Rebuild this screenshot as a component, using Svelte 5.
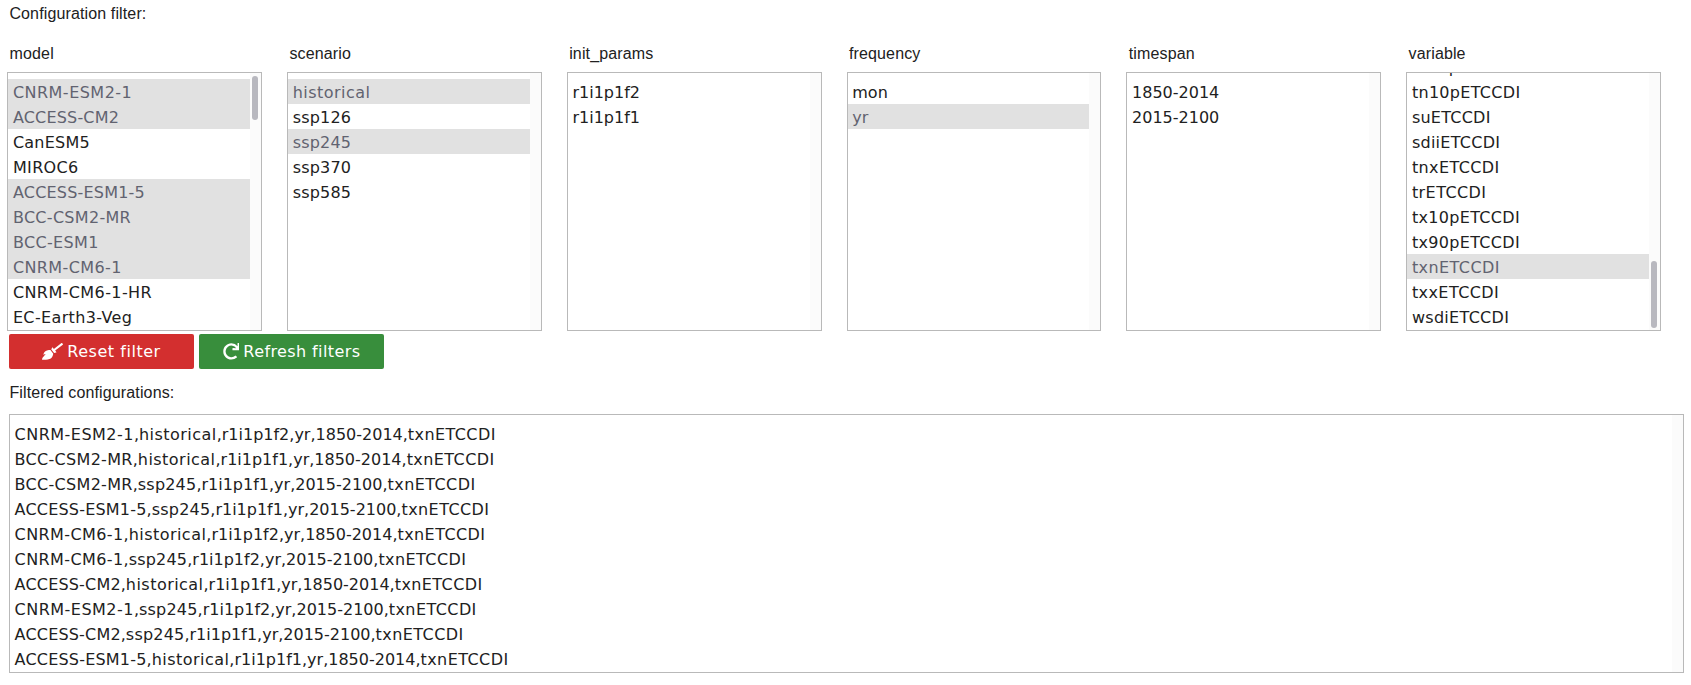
<script>
  // Extra letter spacing, in pixels, for each value shown in the lists.
  const tracking = {
    'CNRM-ESM2-1': 0.48,
    'ACCESS-CM2': 0.18,
    CanESM5: 0.24,
    MIROC6: 0.36,
    'ACCESS-ESM1-5': 0.2,
    'BCC-CSM2-MR': 0.3,
    'BCC-ESM1': 0.35,
    'CNRM-CM6-1': 0.4,
    'CNRM-CM6-1-HR': 0.41,
    'EC-Earth3-Veg': 0.36,
    historical: 0.46,
    ssp126: 0.2,
    ssp245: 0.2,
    ssp370: 0.2,
    ssp585: 0.2,
    tn10pETCCDI: 0.3,
    suETCCDI: 0.24,
    sdiiETCCDI: 0.26,
    tnxETCCDI: 0.4,
    trETCCDI: 0.43,
    tx10pETCCDI: 0.32,
    tx90pETCCDI: 0.32,
    txnETCCDI: 0.42,
    txxETCCDI: 0.42,
    wsdiETCCDI: 0.3
  };
  const space = (value) => tracking[value] ?? 0;

  const filters = [
    {
      name: 'model',
      options: ['CNRM-ESM2-1', 'ACCESS-CM2', 'CanESM5', 'MIROC6', 'ACCESS-ESM1-5', 'BCC-CSM2-MR', 'BCC-ESM1', 'CNRM-CM6-1', 'CNRM-CM6-1-HR', 'EC-Earth3-Veg'],
      selected: ['CNRM-ESM2-1', 'ACCESS-CM2', 'ACCESS-ESM1-5', 'BCC-CSM2-MR', 'BCC-ESM1', 'CNRM-CM6-1'],
      thumb: { top: 3, height: 44 }
    },
    { name: 'scenario', options: ['historical', 'ssp126', 'ssp245', 'ssp370', 'ssp585'], selected: ['historical', 'ssp245'] },
    { name: 'init_params', options: ['r1i1p1f2', 'r1i1p1f1'], selected: [] },
    { name: 'frequency', options: ['mon', 'yr'], selected: ['yr'] },
    { name: 'timespan', options: ['1850-2014', '2015-2100'], selected: [] },
    {
      name: 'variable',
      options: ['tn90pETCCDI', 'tn10pETCCDI', 'suETCCDI', 'sdiiETCCDI', 'tnxETCCDI', 'trETCCDI', 'tx10pETCCDI', 'tx90pETCCDI', 'txnETCCDI', 'txxETCCDI', 'wsdiETCCDI'],
      selected: ['txnETCCDI'],
      thumb: { top: 188, height: 67 },
      scrolled: true
    }
  ];
  const configurations = [
    'CNRM-ESM2-1,historical,r1i1p1f2,yr,1850-2014,txnETCCDI',
    'BCC-CSM2-MR,historical,r1i1p1f1,yr,1850-2014,txnETCCDI',
    'BCC-CSM2-MR,ssp245,r1i1p1f1,yr,2015-2100,txnETCCDI',
    'ACCESS-ESM1-5,ssp245,r1i1p1f1,yr,2015-2100,txnETCCDI',
    'CNRM-CM6-1,historical,r1i1p1f2,yr,1850-2014,txnETCCDI',
    'CNRM-CM6-1,ssp245,r1i1p1f2,yr,2015-2100,txnETCCDI',
    'ACCESS-CM2,historical,r1i1p1f1,yr,1850-2014,txnETCCDI',
    'CNRM-ESM2-1,ssp245,r1i1p1f2,yr,2015-2100,txnETCCDI',
    'ACCESS-CM2,ssp245,r1i1p1f1,yr,2015-2100,txnETCCDI',
    'ACCESS-ESM1-5,historical,r1i1p1f1,yr,1850-2014,txnETCCDI'
  ];
</script>

<main>
  <div class="label title">Configuration filter:</div>
  <div class="filters">
    {#each filters as f}
      <section>
        <div class="label name">{f.name}</div>
        <div class="list" class:scrolled={f.scrolled}>
          <div class="options">
            {#each f.options as o}
              <div class="option" class:selected={f.selected.includes(o)} style="letter-spacing: {space(o)}px">{o}</div>
            {/each}
          </div>
          <div class="track">
            {#if f.thumb}
              <div class="thumb" style="margin-top: {f.thumb.top}px; height: {f.thumb.height}px"></div>
            {/if}
          </div>
        </div>
      </section>
    {/each}
  </div>
  <div class="buttons">
    <button class="reset">
      <svg width="21" height="16.8" viewBox="0 0 640 512"><path fill="currentColor" d="M256.47 216.77l86.73 109.18s-16.6 102.36-76.57 150.12C206.66 523.85 0 510.19 0 510.19s3.8-23.14 11-55.43l94.62-112.17c3.97-4.7-.87-11.62-6.65-9.5l-60.4 22.09c14.44-41.66 32.72-80.04 54.6-97.47 59.97-47.76 163.3-40.94 163.3-40.94zM636.53 31.03l-19.86-25c-5.49-6.9-15.52-8.05-22.41-2.56l-232.48 177.8-34.14-42.97c-5.09-6.41-15.14-5.21-18.59 2.21l-25.33 54.55 86.73 109.18 58.8-12.45c8-1.69 11.42-11.2 6.34-17.6l-34.09-42.92 232.48-177.8c6.89-5.48 8.04-15.53 2.55-22.44z" /></svg>
      <span>Reset filter</span>
    </button>
    <button class="refresh">
      <svg width="16.8" height="16.8" viewBox="0 0 512 512"><path fill="currentColor" d="M500.33 0h-47.41a12 12 0 0 0-12 12.57l4 82.76A247.42 247.42 0 0 0 256 8C119.34 8 7.9 119.53 8 256.19 8.1 393.07 119.1 504 256 504a247.1 247.1 0 0 0 166.18-63.91 12 12 0 0 0 .48-17.43l-34-34a12 12 0 0 0-16.38-.55A176 176 0 1 1 402.1 157.8l-101.53-4.87a12 12 0 0 0-12.57 12v47.41a12 12 0 0 0 12 12h200.33a12 12 0 0 0 12-12V12a12 12 0 0 0-12-12z" /></svg>
      <span>Refresh filters</span>
    </button>
  </div>
  <div class="label result">Filtered configurations:</div>
  <div class="list wide">
    <div class="options">
      {#each configurations as c}
        <div class="option">{#each c.split(',') as part, i}{i ? ',' : ''}<span style="letter-spacing: {space(part)}px">{part}</span>{/each}</div>
      {/each}
    </div>
    <div class="track"></div>
  </div>
</main>

<style>
  :global(body) { background: #fff; }
  main {
    box-sizing: border-box;
    height: 685px;
    overflow: hidden;
    color: #212121;
    font: 16px/25px "DejaVu Sans", sans-serif;
  }
  .label {
    font-family: "Liberation Sans", Arial, sans-serif;
    letter-spacing: 0.13px;
    white-space: nowrap;
  }
  .title { height: 40px; padding: 1px 0 0 9.4px; box-sizing: border-box; }
  .filters {
    display: grid;
    grid-template-columns: repeat(6, 254.8px);
    column-gap: 25px;
    padding-left: 7.3px;
  }
  .name { height: 32px; padding: 1px 0 0 2.3px; box-sizing: border-box; }
  .list {
    display: flex;
    box-sizing: border-box;
    height: 259px;
    border: 1px solid #b9b9b9;
    overflow: hidden;
  }
  .options { flex: 1; padding-top: 6px; }
  .scrolled .options { margin-top: -25px; }
  .option {
    box-sizing: border-box;
    height: 25px;
    padding: 1px 0 0 4.6px;
    white-space: pre;
  }
  .selected { background: #e1e1e1; color: #616370; }
  .track { width: 11px; background: #fbfbfb; }
  .thumb { width: 6px; margin-left: 2px; border-radius: 3px; background: #b8b8bf; }
  .buttons { display: flex; gap: 5px; padding: 3px 0 0 9px; }
  button {
    display: flex;
    align-items: center;
    justify-content: center;
    gap: 4px;
    width: 185px;
    height: 35px;
    padding: 0;
    border: 0;
    border-radius: 2px;
    color: #fff;
    font: 16px/35px "DejaVu Sans", sans-serif;
  }
  .reset { background: #d32f2f; letter-spacing: 0.53px; }
  .refresh { background: #388e3c; letter-spacing: 0.4px; }
  .result { height: 45px; padding: 11px 0 0 9.4px; box-sizing: border-box; }
  .wide { margin: 0 7px 0 9px; }
  .wide .options { padding-top: 6px; }
</style>
